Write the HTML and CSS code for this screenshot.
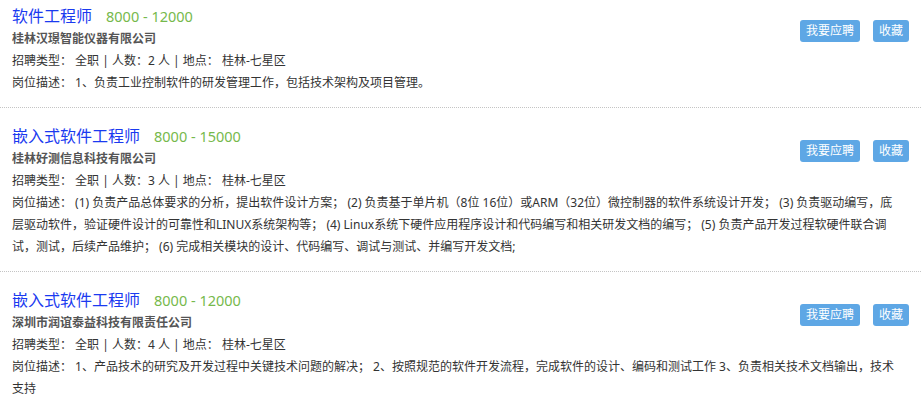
FILE: index.html
```html
<!DOCTYPE html>
<html lang="zh-CN">
<head>
    <meta charset="UTF-8">
    <title>职位列表</title>
    <link rel="stylesheet" href="styles.css">
</head>
<body>
    <div class="job-list">
        <div class="job-item">
            <div class="job-head">
                <div class="job-main">
                    <div class="job-title">
                        <a class="job-name" href="#">软件工程师</a>
                        <span class="job-salary">8000 - 12000</span>
                    </div>
                    <div class="job-company">桂林汉璟智能仪器有限公司</div>
                </div>
                <div class="job-actions">
                    <button class="btn">我要应聘</button>
                    <button class="btn">收藏</button>
                </div>
            </div>
            <div class="job-row">招聘类型： 全职 | 人数：2 人 | 地点： 桂林-七星区</div>
            <div class="job-row">岗位描述： 1、负责工业控制软件的研发管理工作，包括技术架构及项目管理。</div>
        </div>

        <div class="job-item">
            <div class="job-head">
                <div class="job-main">
                    <div class="job-title">
                        <a class="job-name" href="#">嵌入式软件工程师</a>
                        <span class="job-salary">8000 - 15000</span>
                    </div>
                    <div class="job-company">桂林好测信息科技有限公司</div>
                </div>
                <div class="job-actions">
                    <button class="btn">我要应聘</button>
                    <button class="btn">收藏</button>
                </div>
            </div>
            <div class="job-row">招聘类型： 全职 | 人数：3 人 | 地点： 桂林-七星区</div>
            <div class="job-row">岗位描述： (1) 负责产品总体要求的分析，提出软件设计方案； (2) 负责基于单片机（8位 16位）或ARM（32位）微控制器的软件系统设计开发； (3) 负责驱动编写，底层驱动软件，验证硬件设计的可靠性和LINUX系统架构等； (4) Linux系统下硬件应用程序设计和代码编写和相关研发文档的编写； (5) 负责产品开发过程软硬件联合调试，测试，后续产品维护； (6) 完成相关模块的设计、代码编写、调试与测试、并编写开发文档;</div>
        </div>

        <div class="job-item">
            <div class="job-head">
                <div class="job-main">
                    <div class="job-title">
                        <a class="job-name" href="#">嵌入式软件工程师</a>
                        <span class="job-salary">8000 - 12000</span>
                    </div>
                    <div class="job-company">深圳市润谊泰益科技有限责任公司</div>
                </div>
                <div class="job-actions">
                    <button class="btn">我要应聘</button>
                    <button class="btn">收藏</button>
                </div>
            </div>
            <div class="job-row">招聘类型： 全职 | 人数：4 人 | 地点： 桂林-七星区</div>
            <div class="job-row">岗位描述： 1、产品技术的研究及开发过程中关键技术问题的解决； 2、按照规范的软件开发流程，完成软件的设计、编码和测试工作 3、负责相关技术文档输出，技术支持</div>
        </div>
    </div>
</body>
</html>
```

FILE: styles.css
```css
/* 基本样式 */
html, body {
    overflow: hidden;
}
body {
    margin: 0;
    background-color: #fff;
    font-family: "Noto Sans", "Noto Sans CJK SC", sans-serif;
    font-size: 12px;
    color: #333;
}
/* 职位条目 */
.job-item {
    padding: 16px 12px 13px;
    border-bottom: 1px dotted #c4c4c4;
}
.job-item:first-child {
    padding-top: 4px;
}
.job-head {
    display: flex;
    justify-content: space-between;
    align-items: flex-start;
}
.job-title {
    display: flex;
    align-items: baseline;
    gap: 14px;
    height: 24px;
    line-height: 24px;
}
.job-name {
    font-size: 16px;
    color: #1a3af0;
    text-decoration: none;
}
.job-salary {
    font-size: 14.5px;
    color: #76b94c;
}
.job-company {
    font-weight: bold;
    color: #555;
    line-height: 22px;
}
.job-row {
    line-height: 22px;
    padding-right: 8px;
    word-break: break-all;
}
/* 按钮 */
.job-actions {
    display: flex;
    gap: 13px;
    margin-top: 16px;
}
.btn {
    height: 22px;
    padding: 0 6px;
    border: none;
    border-radius: 3px;
    background-color: #5ea7e5;
    color: #fff;
    font-family: inherit;
    font-size: 12px;
    line-height: 22px;
    cursor: pointer;
}
.btn:hover {
    background-color: #4a94d4;
}
```
